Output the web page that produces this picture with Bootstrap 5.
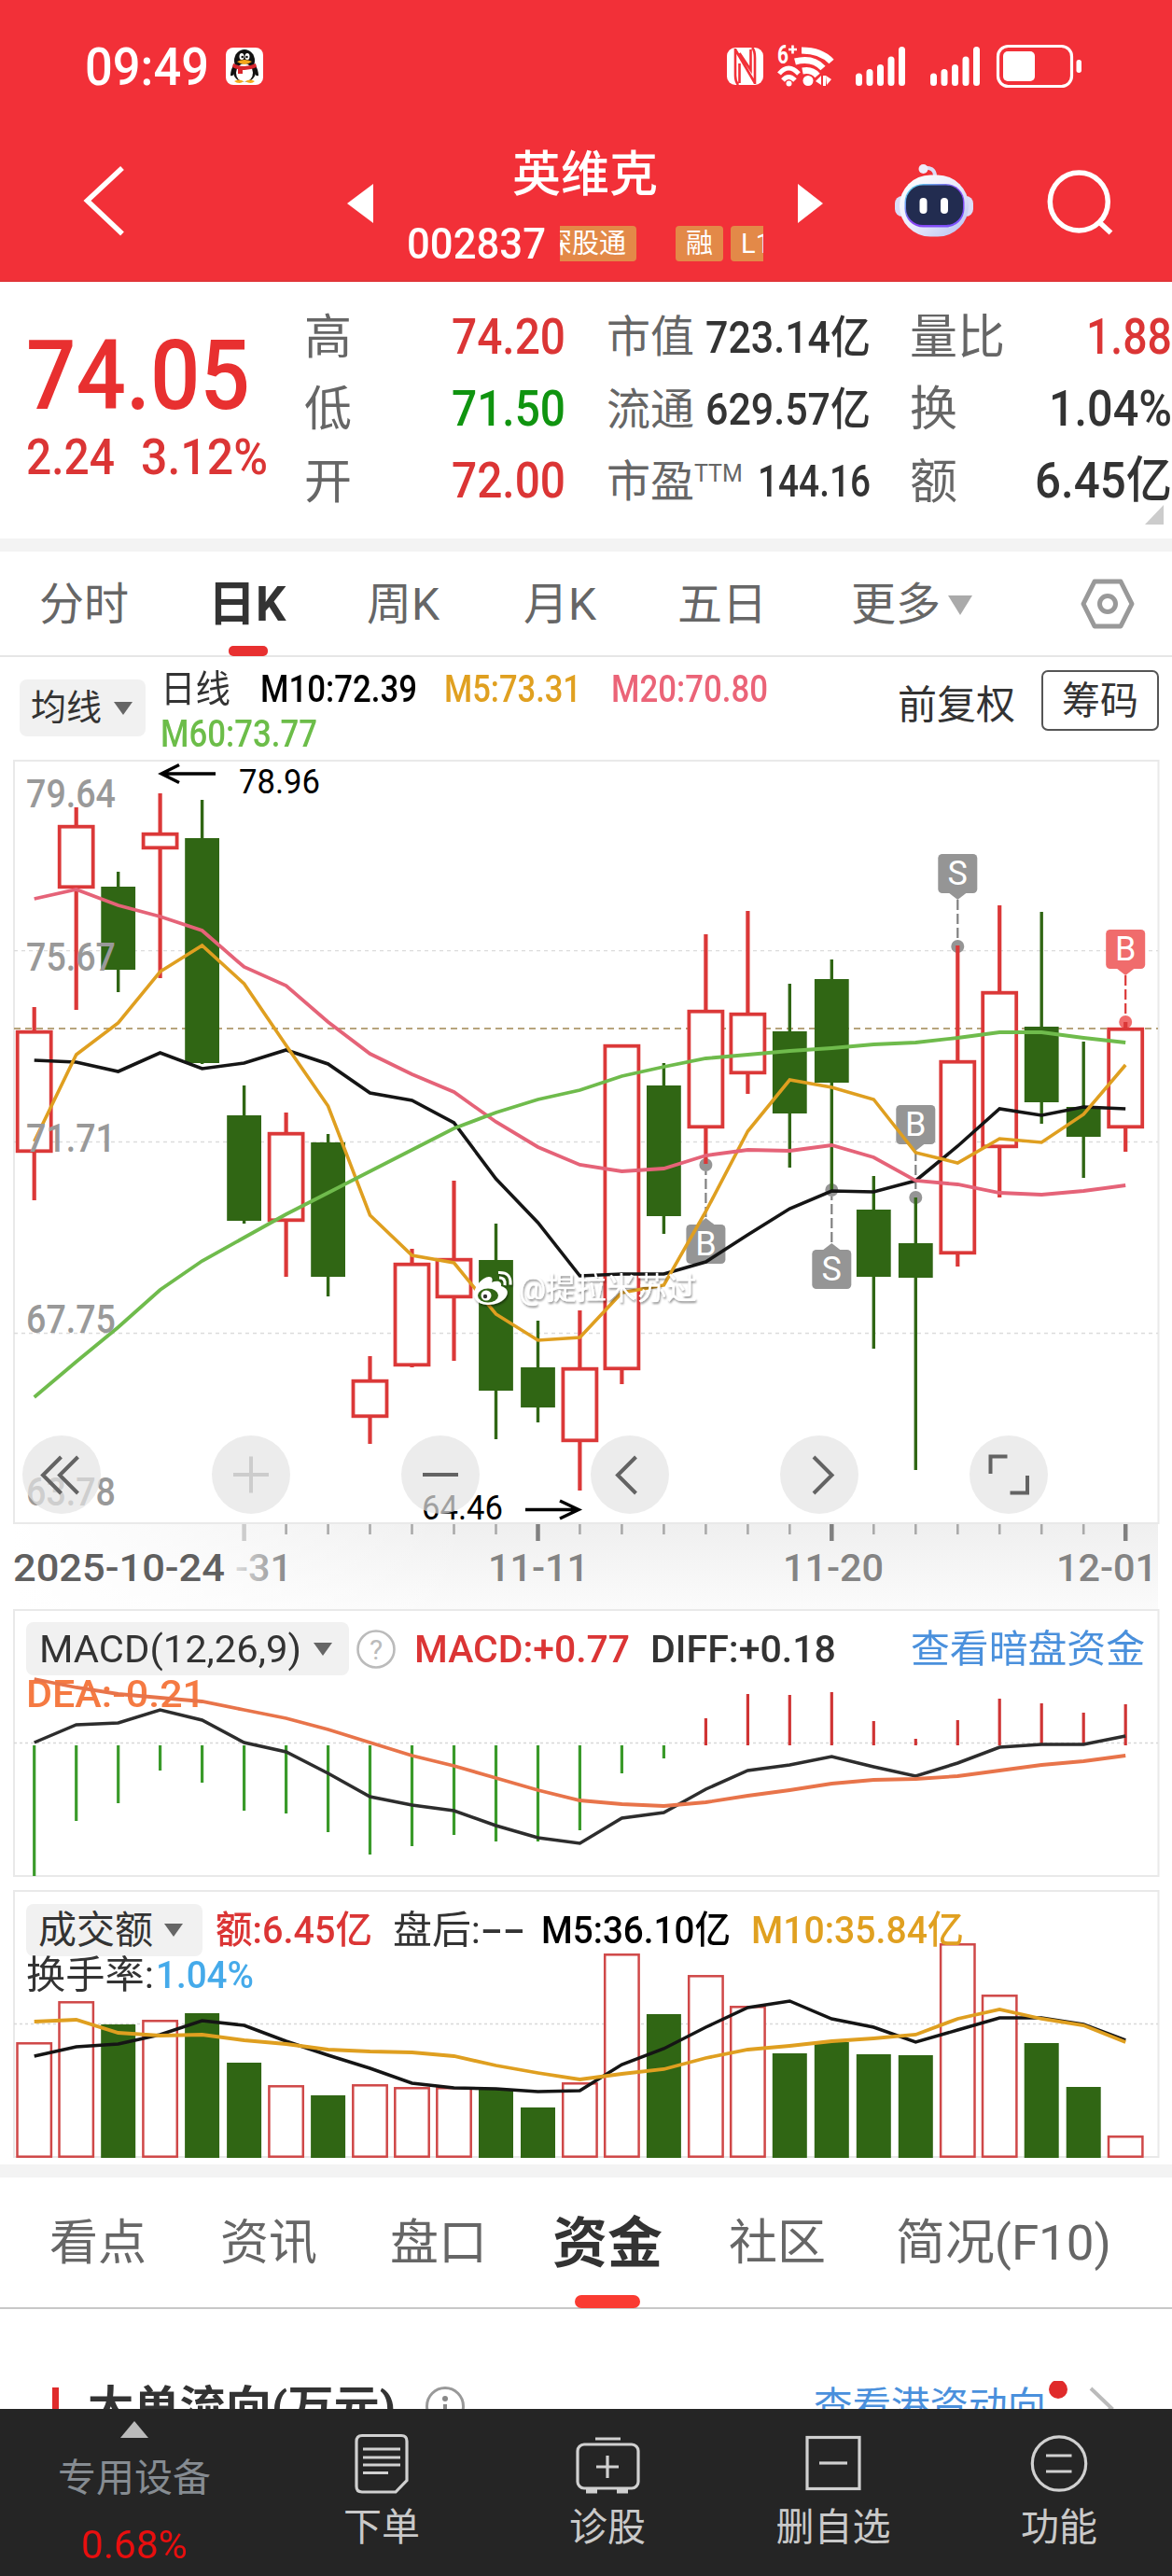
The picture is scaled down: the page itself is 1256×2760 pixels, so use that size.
<!DOCTYPE html>
<html lang="zh-CN">
<head>
<meta charset="utf-8">
<meta name="viewport" content="width=device-width, initial-scale=1">
<title>英维克 002837</title>
<link rel="stylesheet" href="https://cdn.jsdelivr.net/npm/bootstrap@5.3.0/dist/css/bootstrap.min.css">
<style>
body{font-family:Roboto,"Noto Sans CJK SC",sans-serif;color:#333;width:1256px;line-height:1.2;overflow-x:hidden}
svg{display:block;flex:none}
svg text{font-family:Roboto,"Noto Sans CJK SC",sans-serif}
.fit{display:inline-block;white-space:nowrap;transform-origin:0 50%;flex:none}
.app-head{background:#f23038;height:302px;border-bottom:2px solid #e13538}
.status{height:142px;padding-left:91px}
.clock{font-size:56px;font-weight:500;padding-top:3px}
.qq{margin-left:18px}
.sys{margin-left:auto;margin-right:90px}
.topnav{display:grid;grid-template-columns:340px 96px 382px 112px 150px 176px;height:158px}
.stock-name{font-size:52px;line-height:56px;margin-top:18px;font-weight:500}
.code-line{height:54px;margin-top:18px}
.code-num{font-size:47px;font-weight:500}
.tags{width:221px;height:38px;overflow:hidden;margin-left:15px;font-size:29px;gap:8px;white-space:nowrap}
.tag{background:#e38948;height:38px;line-height:38px;border-radius:4px;flex:none;padding:0 11px;width:51px}
.tag-first{width:82px;padding:0 11px 0 0;margin-right:34px;display:flex;justify-content:flex-end;overflow:hidden;border-radius:0 4px 4px 0}
.quote{height:275px}
.price-col{width:326px;padding:53px 0 0 28px}
.price{font-size:104px;font-weight:500;line-height:96px;color:#e83030}
.chg{font-size:53px;font-weight:500;color:#db3535;line-height:60px;margin-top:9px}
.qgrid{display:grid;grid-template-columns:280px 44px 283px 42px 281px;grid-auto-rows:77.3px;padding-top:21px;align-items:center}
.cell{display:flex;justify-content:space-between;align-items:center;font-size:51px;color:#666}
.cell b{font-weight:500;font-size:53px;color:#333}
.cell.mid{font-size:47px}.cell.mid b{font-size:48px}
.cell .up{color:#db3535}.cell .down{color:#109410}
.ttm{font-size:25px;position:relative;top:-16px}
.band{height:14px;background:#f3f3f3}
.ktabs{display:grid;grid-template-columns:186px 165px 168px 165px 186px 245px 98px;height:113px;padding-left:42px;border-bottom:2px solid #e6e6e6;align-items:center;font-size:48px;color:#666}
.ktabs>span{padding-top:3px}
.ktabs .on,.ftabs .on{color:#333;font-weight:700;position:relative}
.ktabs .on{font-size:51px;margin-left:-5px}
.ktabs .on::after{content:"";position:absolute;left:22px;bottom:-24px;width:42px;height:11px;border-radius:5px;background:#e83030}
.tri{display:inline-block;width:0;height:0;border:10px solid transparent;border-top:14px solid #666;border-bottom:0}
.tri.big{border-width:21px 13px 0;border-top-color:#aaa}
.ma-bar{height:109px;padding-left:21px}
.picker{background:#f1f1f1;border-radius:8px;gap:13px;font-size:41px}
.ma-pick{width:135px;height:61px;margin-top:24px;padding-left:12px;font-size:38px}
.legend{width:740px;margin:11px 0 0 16px;column-gap:32px;font-size:40px;line-height:48px;font-weight:500}
.fq{font-size:42px;margin:27px 0 0 50px;line-height:50px}
.chip-btn{width:126px;height:65px;border:2px solid #555;border-radius:7px;font-size:41px;line-height:62px;margin:14px 0 0 28px;text-align:center}
.c-amber{color:#e0a020}.c-pink{color:#eb6478}.c-green{color:#6cbd49}.c-red{color:#db3535}.c-link{color:#4a90dc}.c-orange{color:#f57a42}.c-blue{color:#45aaea}
.macd{height:294px}.vol{height:301px}
.over{position:absolute;inset:0}
.ind{position:relative;font-size:41px;padding-left:28px;line-height:56px}
.ind .fit{font-weight:500;padding-top:1px}
.ftabs{display:grid;grid-template-columns:183px 182px 174px 189px 179px 296px;height:141px;padding-left:53px;border-bottom:2px solid #c8c8c8;align-items:center;font-size:52px;color:#666}
.ftabs>span{padding-top:4px}
.ftabs .on{font-size:59px}
.ftabs .on::after{content:"";position:absolute;left:24px;bottom:-33px;width:70px;height:14px;border-radius:7px;background:#fa3b32}
.flow{height:107px;overflow:hidden;padding:77px 0 0 56px}
.flow-title{font-size:45px;line-height:56px;font-weight:700;margin-left:31px}
.flow-link{font-size:41.5px;line-height:56px}
.dock{height:179px;background:#252525;color:#c9c9c9;font-size:41px}
.dock-item{text-align:center;width:242px}
.dock-item svg{margin:20px auto 0}
.dock-item span.lbl{display:block;line-height:50px;margin-top:6px}
.sector{width:288px;text-align:center;color:#868c92}
</style>
</head>
<body class="bg-white">
<header class="app-head text-white">
  <div class="status d-flex align-items-center">
    <span class="fit clock" data-w="133">09:49</span>
    <svg class="qq" width="40" height="40" viewBox="0 0 40 40"><rect width="40" height="40" rx="8" fill="#fff"/><ellipse cx="20" cy="14" rx="11" ry="12" fill="#111"/><path d="M9 17Q5 24 5 30q3 1 4-3l2-3zM31 17q4 7 4 13-3 1-4-3l-2-3z" fill="#111"/><ellipse cx="20" cy="26" rx="12" ry="11" fill="#111"/><ellipse cx="20" cy="27" rx="9" ry="10" fill="#fff"/><ellipse cx="17" cy="9.500" rx="2.500" ry="3.500" fill="#fff"/><ellipse cx="23" cy="9.500" rx="2.500" ry="3.500" fill="#fff"/><circle cx="17.700" cy="10" r="1.200"/><circle cx="22.500" cy="10" r="1.200"/><path d="M12 15q8-4 16 0-8 6-16 0z" fill="#f5a81c"/><path d="M8 17q12 6 24 0l1 4q-13 6-26 0zM13 22h5v6h-5z" fill="#d8262c"/><path d="M9 36q5-3 10 0-4 4-10 0zM21 36q5-3 10 0-4 4-10 0z" fill="#f5a81c"/></svg>
    <svg class="sys" width="390" height="60" viewBox="776 41 390 60" fill="none" stroke="#fff">
      <rect x="779" y="51" width="39" height="40" rx="9" fill="#fff" stroke="none"/>
      <path d="M788 52v29q0 6 3 10M788 53l21 36M809 90V62q0-8-3-11M792.500 68v21M804.500 53v22l-12-18" stroke="#f23038" stroke-width="2.600"/>
      <path d="M859 54q21 0 32 12M852 66q19-5 30 7M860 76q10-2 16 5" stroke-width="7"/>
      <path d="M835 79q10-12 21 0M839 86q6-7 13 0" stroke-width="5"/><circle cx="845.500" cy="89.500" r="3" fill="#fff" stroke="none"/>
      <circle cx="866" cy="86.500" r="5.500" fill="#fff" stroke="none"/><path d="M874 87l6-6v10zM882 81h3v11h-3zM885 81l6 4-5 6z" fill="#fff" stroke="none"/>
      <text x="833" y="68" font-size="27" font-weight="700" fill="#fff" stroke="none" textLength="12" lengthAdjust="spacingAndGlyphs">6</text><path d="M845 53h9M849.500 48.500v9" stroke-width="2.600"/>
      <g stroke-width="7" stroke-linecap="round"><path id="sig" d="M920.500 82v6.500M932 77.500v11M943.500 72.500v16M955 64v24.500M966.500 53.500v35"/><use href="#sig" x="80"/></g>
      <rect x="1069.500" y="49.500" width="79" height="43" rx="11" stroke-width="3.200"/><rect x="1075" y="55" width="34" height="32" rx="5" fill="#fff" stroke="none"/><rect x="1153.500" y="64" width="5.500" height="14" rx="2.700" fill="#fff" stroke="none"/>
    </svg>
  </div>
  <nav class="topnav">
    <svg width="340" height="158" viewBox="0 142 340 158"><path d="M131 180L93.500 215l37.500 35.500" fill="none" stroke="#fff" stroke-width="5.500"/></svg>
    <svg width="96" height="158" viewBox="340 142 96 158"><path d="M372 218l28-21v42z" fill="#fff"/></svg>
    <div>
      <div class="stock-name text-center">英维克</div>
      <div class="code-line d-flex align-items-center">
        <span class="fit code-num" data-w="149">002837</span>
        <div class="tags d-flex"><span class="tag tag-first">深股通</span><span class="tag">融</span><span class="tag">L1</span></div>
      </div>
    </div>
    <svg width="112" height="158" viewBox="818 142 112 158"><path d="M855 197l27 21-27 21z" fill="#fff"/></svg>
    <svg width="150" height="158" viewBox="930 142 150 158">
      <defs><linearGradient id="rb" x1="0" y1="0" x2="1" y2="1"><stop offset="0" stop-color="#fff"/><stop offset=".5" stop-color="#ececfb"/><stop offset="1" stop-color="#b3bdf0"/></linearGradient><linearGradient id="rf" x1="0" y1="0" x2="1" y2="1"><stop offset="0" stop-color="#5ee"/><stop offset=".5" stop-color="#84e"/><stop offset="1" stop-color="#75f"/></linearGradient></defs>
      <path d="M988 180q14-2 14 9" fill="none" stroke="#dcdcf5" stroke-width="4"/><circle cx="989.500" cy="181" r="5" fill="#eeecfb"/>
      <rect x="959" y="210" width="84" height="22" rx="8" fill="#dcdcf8"/><rect x="964" y="187.500" width="74" height="66" rx="33" fill="url(#rb)"/><rect x="969.500" y="197" width="64" height="46.500" rx="20" fill="url(#rf)"/><rect x="971" y="198.500" width="61" height="42.500" rx="18" fill="#222c50"/><rect x="985.500" y="212" width="8" height="17" rx="4" fill="#fff"/><rect x="1008" y="212" width="8" height="17" rx="4" fill="#fff"/>
    </svg>
    <svg width="176" height="158" viewBox="1080 142 176 158" fill="none" stroke="#fff"><circle cx="1156.300" cy="216" r="31" stroke-width="5.500"/><path d="M1178 238l12.500 11.500" stroke-width="5.500"/></svg>
  </nav>
</header>

<section class="quote d-flex position-relative">
  <div class="price-col">
    <div class="price"><span class="fit" data-w="240">74.05</span></div>
    <div class="chg d-flex"><span class="fit" data-w="95">2.24</span><span class="fit" data-w="136" style="margin-left:28px">3.12%</span></div>
  </div>
  <div class="qgrid">
    <div class="cell"><span>高</span><b class="fit up" data-w="122">74.20</b></div><i></i>
    <div class="cell mid"><span>市值</span><b class="fit" data-w="177">723.14亿</b></div><i></i>
    <div class="cell"><span>量比</span><b class="fit up" data-w="92">1.88</b></div>
    <div class="cell"><span>低</span><b class="fit down" data-w="122">71.50</b></div><i></i>
    <div class="cell mid"><span>流通</span><b class="fit" data-w="177">629.57亿</b></div><i></i>
    <div class="cell"><span>换</span><b class="fit" data-w="132">1.04%</b></div>
    <div class="cell"><span>开</span><b class="fit up" data-w="122">72.00</b></div><i></i>
    <div class="cell mid"><span>市盈<span class="ttm">TTM</span></span><b class="fit" data-w="121">144.16</b></div><i></i>
    <div class="cell"><span>额</span><b class="fit" data-w="147">6.45亿</b></div>
  </div>
  <svg class="position-absolute bottom-0 end-0" width="30" height="36"><path d="M1 21L21 0v21z" fill="#ccc"/></svg>
</section>
<div class="band"></div>

<nav class="ktabs">
  <span>分时</span><span class="on">日K</span><span>周K</span><span>月K</span><span>五日</span>
  <span class="d-flex align-items-center gap-2">更多<i class="tri big"></i></span>
  <svg width="60" height="60" viewBox="1156 617 60 60" fill="none" stroke="#999" stroke-width="5"><path d="M1172 623h28l12 24-12 24h-28l-12-24z" stroke-linejoin="round"/><circle cx="1186" cy="647" r="8.500"/></svg>
</nav>

<div class="ma-bar d-flex align-items-start">
  <div class="picker ma-pick d-flex align-items-center">均线<i class="tri"></i></div>
  <div class="legend d-flex flex-wrap">
    <span class="fit fw-normal" data-w="75">日线</span><span class="fit text-black" data-w="168">M10:72.39</span><span class="fit c-amber" data-w="147" style="margin-left:-3px">M5:73.31</span><span class="fit c-pink" data-w="168">M20:70.80</span><span class="fit c-green" data-w="168">M60:73.77</span>
  </div>
  <span class="fq">前复权</span><span class="chip-btn">筹码</span>
</div>

<svg id="kline" width="1256" height="911" viewBox="0 813 1256 911"></svg>

<section class="macd position-relative">
  <div class="ind pt-3">
    <div class="d-flex align-items-center" style="margin-top:-2px">
      <span class="picker d-flex align-items-center" style="width:346px;padding-left:14px"><span class="fit fw-normal" data-w="281">MACD(12,26,9)</span><i class="tri"></i></span>
      <svg width="44" height="44" viewBox="0 0 44 44" style="margin-left:7px"><circle cx="22" cy="22" r="19.500" fill="none" stroke="#bbb" stroke-width="2.600"/><text x="22" y="33" font-size="30" text-anchor="middle" fill="#bbb">?</text></svg>
      <span class="fit c-red" data-w="231" style="margin-left:19px">MACD:+0.77</span><span class="fit" data-w="199" style="margin-left:22px">DIFF:+0.18</span>
      <span class="fit fw-normal c-link" data-w="251" style="margin-left:80px">查看暗盘资金</span>
    </div>
    <div class="c-orange" style="margin-top:-9px"><span class="fit" data-w="192">DEA:-0.21</span></div>
  </div>
  <svg id="macd" class="over" width="1256" height="294" viewBox="0 1724 1256 294"></svg>
</section>

<section class="vol position-relative">
  <svg id="vol" class="over" width="1256" height="301" viewBox="0 2018 1256 301"></svg>
  <div class="ind" style="padding-top:21px">
    <div class="d-flex align-items-center">
      <span class="picker d-flex align-items-center" style="width:189px;padding-left:13px;gap:12px">成交额<i class="tri"></i></span>
      <span class="fit c-red" data-w="168" style="margin-left:14px">额:6.45亿</span><span class="fit fw-normal" data-w="94" style="margin-left:22px">盘后:</span><span class="fit" data-w="48">--</span><span class="fit text-black" data-w="203" style="margin-left:17px">M5:36.10亿</span><span class="fit c-amber" data-w="228" style="margin-left:22px">M10:35.84亿</span>
    </div>
    <div class="d-flex" style="margin-top:-9px"><span class="fit fw-normal" data-w="137">换手率:</span><span class="fit c-blue" data-w="105" style="margin-left:2px">1.04%</span></div>
  </div>
</section>
<div class="band"></div>

<nav class="ftabs"><span>看点</span><span>资讯</span><span>盘口</span><span class="on">资金</span><span>社区</span><span><span class="fit" data-w="231">简况(F10)</span></span></nav>
<section class="flow d-flex align-items-start">
  <svg width="7" height="50" style="margin-top:7px"><rect width="7" height="50" fill="#e02b2b"/></svg>
  <span class="flow-title fit" data-w="330">大单流向(万元)</span>
  <svg width="44" height="44" viewBox="0 0 44 44" style="margin:5px 0 0 31px"><circle cx="22" cy="22" r="19.500" fill="none" stroke="#999" stroke-width="3"/><circle cx="22" cy="14" r="3" fill="#888"/><path d="M22 20v14" stroke="#888" stroke-width="4"/></svg>
  <span class="flow-link c-link" style="margin-left:373px">查看港资动向</span>
  <svg width="80" height="60" viewBox="1121 2551 80 60"><circle cx="1134" cy="2560" r="10" fill="#e02b2b"/><path d="M1169 2559l22 21-22 21" fill="none" stroke="#bbb" stroke-width="4"/></svg>
</section>

<footer class="dock d-flex">
  <div class="sector">
    <svg class="mx-auto" width="30" height="31"><path d="M15 13l15 18H0z" fill="#bbb"/></svg>
    <div style="line-height:50px;margin-top:18px">专用设备</div>
    <div style="color:#e80f0f;font-size:43px;line-height:50px;margin-top:21px"><span class="fit" data-w="114">0.68%</span></div>
  </div>
  <div class="dock-item"><svg width="70" height="76" viewBox="375 2601 70 76" fill="none" stroke="#d0d0d0" stroke-width="3.200"><path d="M389 2609.500h42q6 0 6 6v42l-12 12.500h-36q-6 0-6-6v-48q0-6.500 6-6.500z"/><path d="M390 2624h40M390 2633h40M390 2641h40M390 2649.500h27"/></svg><span class="lbl">下单</span></div>
  <div class="dock-item"><svg width="80" height="76" viewBox="610 2601 80 76" fill="none" stroke="#d0d0d0" stroke-width="3.200"><rect x="618" y="2619" width="65" height="47" rx="7"/><path d="M637 2613h27M638 2643h24M650 2631v24"/><path d="M627 2669h12M660 2669h12" stroke-width="5"/></svg><span class="lbl">诊股</span></div>
  <div class="dock-item"><svg width="70" height="76" viewBox="857 2601 70 76" fill="none" stroke="#d0d0d0" stroke-width="3.200"><rect x="864" y="2611.500" width="56" height="55"/><path d="M877 2639h30"/></svg><span class="lbl">删自选</span></div>
  <div class="dock-item"><svg width="70" height="76" viewBox="1099 2601 70 76" fill="none" stroke="#d0d0d0" stroke-width="3.200"><circle cx="1134" cy="2639.500" r="28.700"/><path d="M1120 2631h27.500M1120 2648h27.500"/></svg><span class="lbl">功能</span></div>
</footer>
<script src="https://cdn.jsdelivr.net/npm/bootstrap@5.3.0/dist/js/bootstrap.bundle.min.js"></script>
<script>
// Condense a label horizontally so that it occupies data-w pixels.
document.querySelectorAll('.fit').forEach(function(e){
  var n=e.getBoundingClientRect().width,w=+e.dataset.w;
  e.style.transform='scaleX('+(w/n).toFixed(4)+')';
  e.style.marginRight=(w-n).toFixed(2)+'px';
});
var X=function(i){return +(36.7+44.98*i).toFixed(1)};
var RED='#db3838',GRN='#306614';
function line(a,c,w){return '<polyline fill="none" stroke="'+c+'" stroke-width="'+(w||3.8)+'" points="'+a.map(function(y,i){return X(i)+','+y}).join(' ')+'"/>'}
function txt(s,x,y,w,size,fill,extra){return '<text x="'+x+'" y="'+y+'" font-size="'+size+'" fill="'+fill+'" textLength="'+w+'" lengthAdjust="spacingAndGlyphs" '+(extra||'')+'>'+s+'</text>'}
function dash(y,c,d,w){return '<path d="M15 '+y+'H1241" stroke="'+c+'" stroke-width="'+(w||1.3)+'" stroke-dasharray="'+d+'"/>'}

// [rising, high, body top, body bottom, low]
var K=[[1,1079,1104,1235,1286],[1,865,884,952,1082],[0,934,950,1039,1063],[1,850,892,910,1048],[0,857,898,1139,1140],[0,1163,1195,1308,1311],[1,1192,1213,1309,1368],[0,1215,1224,1368,1389],[1,1453,1478,1519,1547],[1,1338,1353,1464,1465],[1,1265,1348,1391,1458],[0,1311,1350,1490,1542],[0,1415,1465,1508,1524],[1,1404,1465,1545,1597],[1,1119,1119,1468,1483],[0,1139,1163,1303,1322],[1,1001,1082,1209,1247],[1,976,1085,1151,1172],[0,1054,1105,1193,1251],[0,1028,1049,1160,1275],[0,1260,1296,1368,1445],[0,1283,1332,1369,1575],[1,1013,1136,1344,1357],[1,970,1062,1230,1283],[0,977,1100,1181,1204],[0,1116,1186,1218,1262],[1,1095,1101,1209,1234]];
var M20=[963,953,970,982,997,1036,1056,1095,1129,1151,1170,1202,1229,1248,1255,1252,1238,1232,1233,1227,1240,1265,1269,1278,1280,1276,1270];
var M10=[1136,1138,1148,1128,1145,1139,1125,1140,1171,1179,1203,1263,1310,1367,1365,1365,1352,1323,1295,1276,1277,1265,1228,1188,1195,1186,1188];
var M5=[1223,1130,1096,1041,1013,1054,1120,1185,1302,1345,1353,1408,1436,1433,1385,1377,1298,1212,1157,1165,1178,1235,1246,1220,1224,1194,1141];
var M60=[1497,1459,1422,1382,1351,1326,1301,1278,1255,1232,1209,1192,1178,1168,1153,1143,1134,1130,1126,1123,1119,1117,1112,1106,1106,1112,1117];
// [index, letter, box top, dot y, colour]
var T=[[16,'B',1312,1248,'#959595'],[19,'S',1339,1275,'#959595'],[21,'B',1184,1283,'#959595'],[22,'S',915,1014,'#959595'],[26,'B',996,1095,'#f06c6c']];
var s='<defs><linearGradient id="gx"><stop offset="0" stop-color="#fff"/><stop offset=".12" stop-color="#fff" stop-opacity=".7"/><stop offset=".4" stop-color="#fff" stop-opacity="0"/></linearGradient><linearGradient id="gy" x2="0" y2="1"><stop offset="0" stop-color="#efefef"/><stop offset="1" stop-color="#fbfbfb"/></linearGradient></defs>';
s+='<rect x="15" y="1632" width="1226" height="92" fill="url(#gy)"/><rect x="15" y="1632" width="1226" height="92" fill="url(#gx)"/>';
s+='<rect x="15" y="815" width="1226.500" height="817" fill="none" stroke="#e9e9e9" stroke-width="2"/>';
[1018.7,1223.5,1428.5].forEach(function(y){s+=dash(y,'#dcdcdc','4 4')});
s+=dash(1102,'#b7a47c','7 5',1.8);
T.forEach(function(t){s+='<circle cx="'+X(t[0])+'" cy="'+t[3]+'" r="7" fill="'+t[4]+'"/>';});
K.forEach(function(k,i){var x=X(i),c=k[0]?RED:GRN;
  if(k[0]){s+='<path d="M'+x+' '+k[1]+'V'+k[2]+'M'+x+' '+k[3]+'V'+k[4]+'" stroke="'+c+'" stroke-width="4.200"/><rect x="'+(x-18)+'" y="'+(k[2]+1.7)+'" width="36" height="'+(k[3]-k[2]-3.4)+'" fill="#fff" stroke="'+c+'" stroke-width="3.800"/>'}
  else{s+='<path d="M'+x+' '+k[1]+'V'+k[4]+'" stroke="'+c+'" stroke-width="3.400"/><rect x="'+(x-18.4)+'" y="'+k[2]+'" width="36.800" height="'+(k[3]-k[2])+'" fill="'+c+'"/>'}});
T.forEach(function(t){var x=X(t[0]),b=t[2],below=t[3]<b,c=t[4];
  s+='<path d="M'+x+' '+(below?(b-8)+'V'+(t[3]+7):(b+49)+'V'+(t[3]-6))+'" stroke="'+(c=='#959595'?'#808080':RED)+'" stroke-width="2.200" stroke-dasharray="11 4"/>';
  s+='<rect x="'+(x-21)+'" y="'+b+'" width="42" height="42" rx="4.500" fill="'+c+'"/><path d="M'+(x-9)+' '+(below?b+'l9-7 9 7z':(b+42)+'l9 7 9-7z')+'" fill="'+c+'"/><text x="'+x+'" y="'+(b+33)+'" font-size="36" text-anchor="middle" fill="#fff">'+t[1]+'</text>'});
s+=line(M10,'#151515',3.6)+line(M5,'#df9f20',3.6)+line(M20,'#e56378')+line(M60,'#6fbb4c');
[['79.64',865],['75.67',1040],['71.71',1234],['67.75',1428],['63.78',1613]].forEach(function(a){s+=txt(a[0],28,a[1],96,42,'#999','font-weight="500"')});
s+=txt('78.96',256,850,87,36,'#000')+txt('64.46',452,1628,87,36,'#000');
s+='<path d="M231 829H173M192 819.500L173 829l19 9.500M563 1617.500h57M600 1608l20 9.500-20 9.500" fill="none" stroke="#000" stroke-width="3.500"/>';
[66,269,472,675,878,1081].forEach(function(x){s+='<circle cx="'+x+'" cy="1580" r="42" fill="#e4e4e4" fill-opacity=".7"/>'});
s+='<g fill="none" stroke="#636363" stroke-width="4"><path d="M65.500 1561L46 1580.500l19.500 19.500M83.500 1561L64 1580.500l19.500 19.500M453 1580h38M681.500 1561L662 1580.500l19.500 19.500M872 1561l19.500 19.500L872 1600M1061.500 1579v-18.500h18M1101 1581v18.500h-18.500"/><path d="M250 1580h38M269 1560.500v39" stroke="#ccc"/></g>';
for(var i=5;i<27;i++){var big=(i-5)%7==0;s+='<path d="M'+X(i)+' 1633V'+(big?1651:1644)+'" stroke="'+(i==5?'#ccc':big?'#808080':'#aaa')+'" stroke-width="'+(big?4.5:2.6)+'"/>'}
s+=txt('2025-10-24',14,1694,227,41,'#606060','font-weight="500"')+txt('-31',252,1694,61,41,'url(#lg)','font-weight="500"')+txt('11-11',523,1694,108,41,'#848484','font-weight="500"')+txt('11-20',839,1694,108,41,'#848484','font-weight="500"')+txt('12-01',1132,1694,108,41,'#848484','font-weight="500"');
s+='<defs><linearGradient id="lg"><stop offset="0" stop-color="#ddd"/><stop offset="1" stop-color="#808080"/></linearGradient><filter id="sh" x="-.1" y="-.3" width="1.2" height="1.6"><feDropShadow dx="1" dy="2" stdDeviation="1.3" flood-color="#000" flood-opacity=".45"/></filter></defs>';
s+='<g filter="url(#sh)"><path d="M508 1388c-1-8 9-20 16-20 4 0 4 3 3 6 5-2 11-2 10 4 6 2 8 5 6 10-3 7-13 10-20 10-8 0-14-4-15-10z" fill="#fff"/><ellipse cx="523" cy="1388" rx="11" ry="7.500" fill="'+GRN+'"/><circle cx="521" cy="1388" r="5.500" fill="#fff"/><circle cx="520" cy="1389" r="2.200" fill="#333"/><path d="M535 1369q7 0 6 8M534 1363.500q14-1 13 13" fill="none" stroke="#fff" stroke-width="3"/>'+txt('@提拉米苏过',556,1392,191,33,'#fff')+'</g>';
document.getElementById('kline').innerHTML=s;

var H=[2010,1951,1932,1897,1910,1940,1943,1963,1987,1978,1966,1973,1973,1961,1900,1884,1841,1815,1816,1813,1844,1863,1843,1820,1825,1835,1826];
var DIF=[1867,1848,1846,1832,1843,1867,1877,1900,1925,1934,1940,1956,1969,1975,1948,1942,1917,1897,1891,1882,1893,1903,1889,1872,1869,1869,1860];
var DEA=[1799,1808,1815,1819,1823,1832,1841,1853,1867,1881,1892,1905,1918,1929,1933,1935,1931,1924,1918,1911,1907,1906,1903,1897,1891,1887,1881];
s='<rect x="15" y="1725" width="1226.500" height="285" fill="none" stroke="#e9e9e9" stroke-width="2"/>'+dash(1867.5,'#d8d8d8','3 3');
H.forEach(function(h,i){s+='<path d="M'+X(i)+' 1870V'+h+'" stroke="'+(h>1870?'#3a9a2a':'#cf3434')+'" stroke-width="3.200"/>'});
document.getElementById('macd').innerHTML=s+line(DIF,'#2d2d2d',3.5)+line(DEA,'#e8744a',3.8);

var V=[2188,2144,2169,2164,2157,2210,2234,2245,2233,2236,2236,2238,2258,2231,2093,2158,2116,2149,2200,2188,2201,2202,2082,2137,2189,2236,2288];
var UP=[1,1,0,1,0,0,1,0,1,1,1,0,0,1,1,0,1,1,0,0,0,0,1,1,0,0,1];
var V5=[2203,2193,2190,2180,2165,2170,2187,2202,2216,2232,2237,2238,2241,2240,2212,2195,2172,2151,2144,2163,2172,2188,2175,2162,2162,2169,2186];
var V10=[2166,2164,2178,2181,2180,2186,2190,2196,2198,2199,2203,2213,2221,2228,2222,2217,2205,2196,2192,2187,2184,2180,2163,2153,2163,2170,2188];
s='<rect x="15" y="2026" width="1226.500" height="285" fill="none" stroke="#e9e9e9" stroke-width="2"/>'+dash(2168.5,'#d8d8d8','3 3');
V.forEach(function(v,i){var x=X(i);s+=UP[i]?'<rect x="'+(x-18.2)+'" y="'+(v+1.3)+'" width="36.400" height="'+(2312-v-2.6)+'" fill="#fff" stroke="#cf4848" stroke-width="2.500"/>':'<rect x="'+(x-18.5)+'" y="'+v+'" width="37" height="'+(2312-v)+'" fill="'+GRN+'"/>'});
document.getElementById('vol').innerHTML=s+line(V5,'#151515',3.5)+line(V10,'#df9f20',3.8);
</script>
</body>
</html>
